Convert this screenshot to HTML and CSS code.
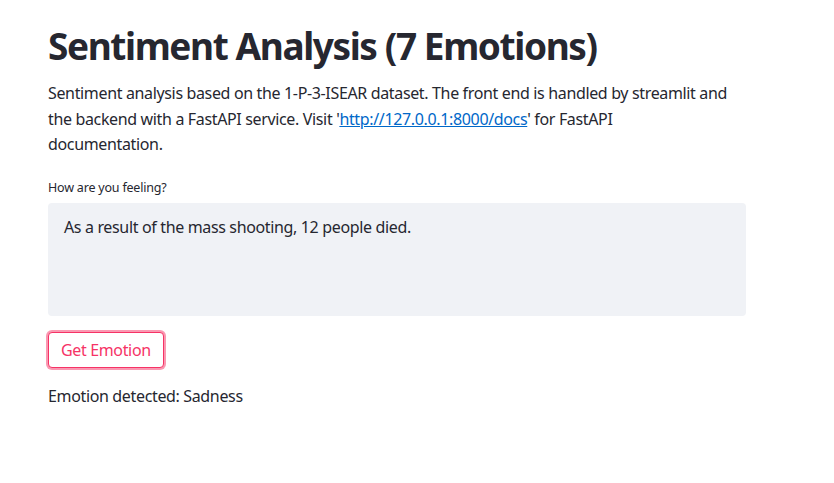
FILE: index.html
```html
<!DOCTYPE html>
<html>
<head>
<meta charset="utf-8">
<link rel="stylesheet" href="styles.css">
</head>
<body>
<main class="block">
  <h1 class="title">Sentiment Analysis (7 Emotions)</h1>
  <p class="intro">Sentiment analysis based on the 1-P-3-ISEAR dataset. The front end is handled by streamlit and the backend with a FastAPI service. Visit '<a href="#">http://127.0.0.1:8000/docs</a>' for FastAPI documentation.</p>
  <label class="label">How are you feeling?</label>
  <div class="textarea">As a result of the mass shooting, 12 people died.</div>
  <button class="btn">Get Emotion</button>
  <p class="result">Emotion detected: Sadness</p>
</main>
</body>
</html>
```
FILE: styles.css
```css
html, body { margin: 0; padding: 0; background: #fff; }
body { font-family: "Noto Sans", "Open Sans", sans-serif; color: rgb(38,39,48); letter-spacing: -0.35px; }
.block { width: 698px; padding: 0 0 0 48px; display: flex; flex-direction: column; align-items: flex-start; }
.title { font-size: 37px; font-weight: 700; margin: 22px 0 0 0; line-height: 48px; letter-spacing: -1.4px; }
.intro { max-width: 681px; font-size: 16px; line-height: 25.6px; margin: 11px 0 0 0; }
.intro a { color: #0068c9; }
.label { font-size: 12.5px; margin-top: 22px; line-height: 16px; letter-spacing: -0.2px; }
.textarea { box-sizing: border-box; width: 698px; height: 113px; margin-top: 7px; background: #f0f2f6; border-radius: 4px; padding: 12px 16px; font-size: 16px; line-height: 24px; }
.btn { margin-top: 16px; font-family: inherit; letter-spacing: -0.35px; font-size: 16px; color: #f63366; background: #fff; border: 1px solid #f63366; border-radius: 4px; padding: 0 12px; height: 36px; box-shadow: 0 0 0 2px rgba(246,51,102,0.5); }
.result { font-size: 16px; line-height: 24px; margin: 16px 0 0 0; }
```
